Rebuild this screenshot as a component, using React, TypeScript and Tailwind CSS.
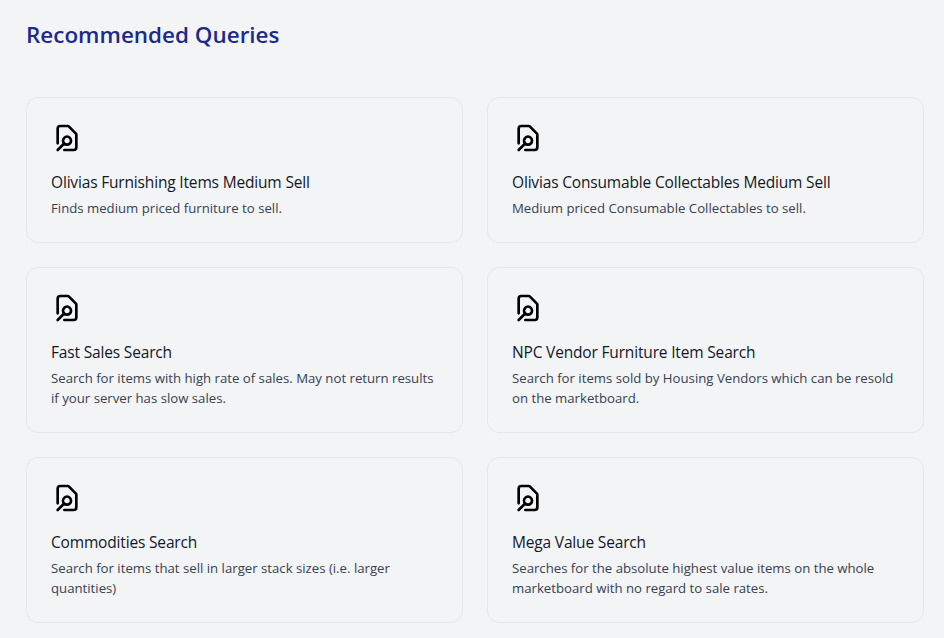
const FONT = "font-['Open_Sans','Noto_Sans',sans-serif]";

const queries = [
  { title: "Olivias Furnishing Items Medium Sell", description: "Finds medium priced furniture to sell." },
  { title: "Olivias Consumable Collectables Medium Sell", description: "Medium priced Consumable Collectables to sell." },
  {
    title: "Fast Sales Search",
    description: "Search for items with high rate of sales. May not return results if your server has slow sales.",
  },
  {
    title: "NPC Vendor Furniture Item Search",
    description: "Search for items sold by Housing Vendors which can be resold on the marketboard.",
  },
  {
    title: "Commodities Search",
    description: "Search for items that sell in larger stack sizes (i.e. larger quantities)",
  },
  {
    title: "Mega Value Search",
    description: "Searches for the absolute highest value items on the whole marketboard with no regard to sale rates.",
  },
];

function DocumentSearchIcon() {
  return (
    <svg className="h-8 w-8 text-black" fill="none" viewBox="0 0 24 24" stroke="currentColor" strokeWidth={2}>
      <path
        strokeLinecap="round"
        strokeLinejoin="round"
        d="M10 21h7a2 2 0 002-2V9.414a1 1 0 00-.293-.707l-5.414-5.414A1 1 0 0012.586 3H7a2 2 0 00-2 2v11m0 5l4.879-4.879m0 0a3 3 0 104.243-4.242 3 3 0 00-4.243 4.242z"
      />
    </svg>
  );
}

export default function App() {
  return (
    <div className={`h-screen overflow-hidden bg-[#f3f4f6] pl-[26px] pr-5 pt-[18px] ${FONT}`}>
      <h1 className="text-[22.45px] leading-[34px] font-semibold text-[#1e2a8a]">Recommended Queries</h1>
      <div className="mt-[45px] grid grid-cols-2 gap-6">
        {queries.map((query) => (
          <div key={query.title} className="rounded-xl border border-[#e5e7eb] p-6">
            <DocumentSearchIcon />
            <h3 className="mt-4 text-[15.5px] leading-6 tracking-[-0.17px] text-[#111827]">{query.title}</h3>
            <p className="mt-1 text-[13.2px] leading-5 text-[#374151]">{query.description}</p>
          </div>
        ))}
      </div>
    </div>
  );
}
